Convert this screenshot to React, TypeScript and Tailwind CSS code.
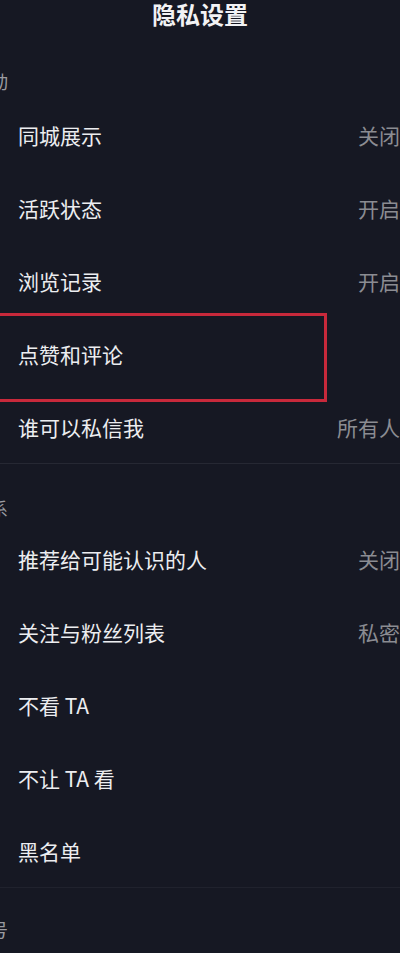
import React from "react";

const font = { fontFamily: '"Noto Sans CJK SC", "Noto Sans", sans-serif' };

type Item = { label: string; value?: string };

const section1: Item[] = [
  { label: "同城展示", value: "关闭" },
  { label: "活跃状态", value: "开启" },
  { label: "浏览记录", value: "开启" },
  { label: "点赞和评论" },
  { label: "谁可以私信我", value: "所有人" },
];

const section2: Item[] = [
  { label: "推荐给可能认识的人", value: "关闭" },
  { label: "关注与粉丝列表", value: "私密" },
  { label: "不看 TA" },
  { label: "不让 TA 看" },
  { label: "黑名单" },
];

function Row({ item }: { item: Item }) {
  return (
    <div className="h-[73px] flex items-center justify-between pl-[18px]">
      <span className="text-[21px] leading-[24px] text-[#ecedf0] whitespace-nowrap">{item.label}</span>
      {item.value && (
        <span className="text-[21px] leading-[24px] text-[#8b8c92] whitespace-nowrap">{item.value}</span>
      )}
    </div>
  );
}

function Header({ text, cls }: { text: string; cls: string }) {
  return (
    <div className={cls}>
      <span className="block ml-[-28px] text-[18px] leading-[18px] text-[#9a9ba1] whitespace-nowrap">{text}</span>
    </div>
  );
}

export default function App() {
  return (
    <div className="relative w-[400px] h-[953px] overflow-hidden bg-[#161823]" style={font}>
      <div className="h-[27px] flex items-center justify-center">
        <span className="text-[24px] leading-[24px] font-bold text-[#f2f2f4]">隐私设置</span>
      </div>
      <Header text="互动" cls="h-[71px] pt-[45px]" />
      {section1.map((it) => (
        <Row key={it.label} item={it} />
      ))}
      <div className="h-px bg-[#262833]" />
      <Header text="关系" cls="h-[58px] pt-[35px]" />
      {section2.map((it) => (
        <Row key={it.label} item={it} />
      ))}
      <div className="h-px bg-[#20222d]" />
      <Header text="账号" cls="h-[60px] pt-[32px]" />

      <div className="absolute left-[-10px] top-[313px] w-[337px] h-[89px] border-[3px] border-[#c8293b]" />
    </div>
  );
}
